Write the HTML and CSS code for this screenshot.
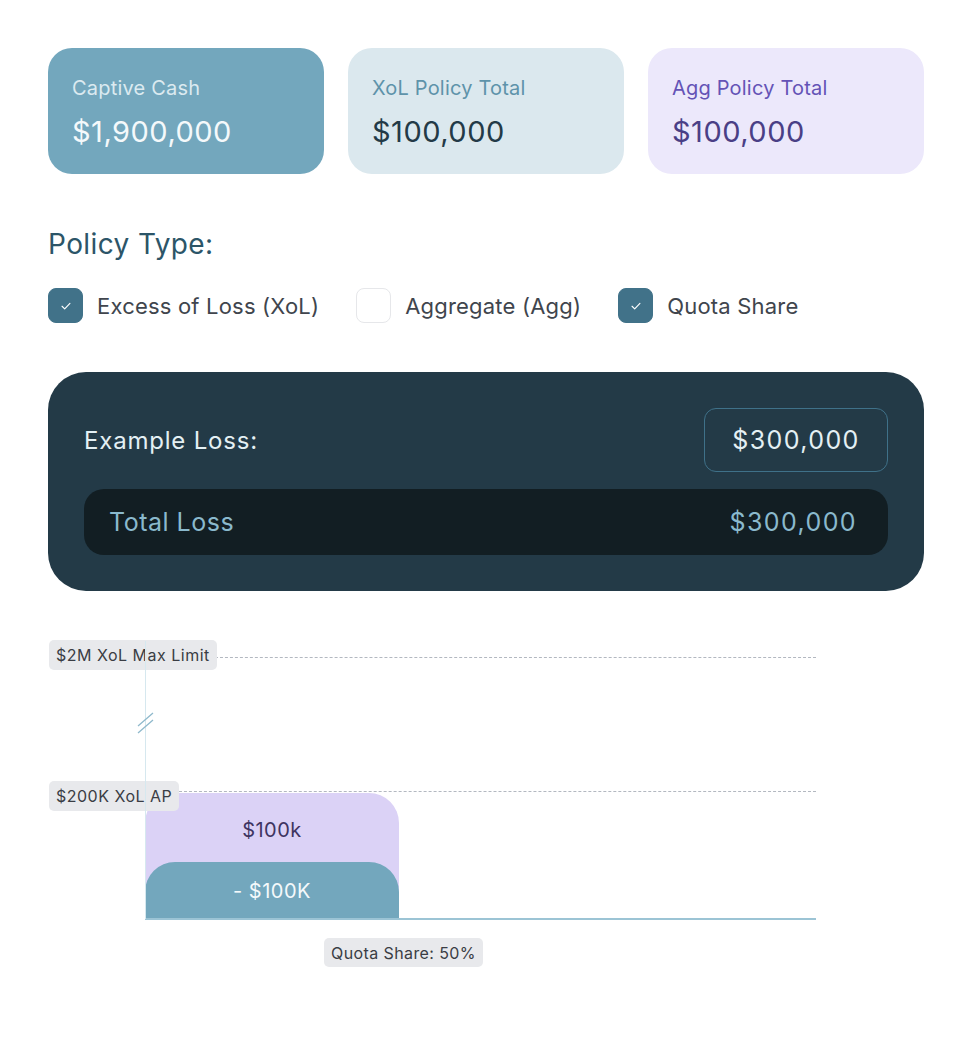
FILE: index.html
```html
<!DOCTYPE html>
<html>
<head>
<meta charset="utf-8">
<link rel="stylesheet" href="styles.css">
</head>
<body>
<main class="page">
  <section class="cards">
    <div class="card card-cash">
      <div class="card-label">Captive Cash</div>
      <div class="card-value">$1,900,000</div>
    </div>
    <div class="card card-xol">
      <div class="card-label">XoL Policy Total</div>
      <div class="card-value">$100,000</div>
    </div>
    <div class="card card-agg">
      <div class="card-label">Agg Policy Total</div>
      <div class="card-value">$100,000</div>
    </div>
  </section>

  <section class="policy">
    <h2 class="policy-title">Policy Type:</h2>
    <div class="options">
      <label class="option">
        <span class="box checked"><svg viewBox="0 0 16 16" width="14" height="14"><path d="M3.5 8.3l3 3 6-6.2" fill="none" stroke="#fff" stroke-width="1.3" stroke-linecap="round" stroke-linejoin="round"/></svg></span>
        <span class="option-text">Excess of Loss (XoL)</span>
      </label>
      <label class="option">
        <span class="box"></span>
        <span class="option-text">Aggregate (Agg)</span>
      </label>
      <label class="option">
        <span class="box checked"><svg viewBox="0 0 16 16" width="14" height="14"><path d="M3.5 8.3l3 3 6-6.2" fill="none" stroke="#fff" stroke-width="1.3" stroke-linecap="round" stroke-linejoin="round"/></svg></span>
        <span class="option-text">Quota Share</span>
      </label>
    </div>
  </section>

  <section class="loss-panel">
    <div class="loss-row">
      <span class="loss-label">Example Loss:</span>
      <div class="loss-input">$300,000</div>
    </div>
    <div class="total-row">
      <span class="total-label">Total Loss</span>
      <span class="total-value">$300,000</span>
    </div>
  </section>

  <section class="chart">
    <div class="pill pill-max">$2M XoL Max Limit</div>
    <div class="dash dash-max"></div>
    <div class="axis"></div>
    <svg class="break" width="20" height="28" viewBox="0 0 20 28"><path d="M2 18L17 5M2 25L17 12" stroke="#8fb9cc" stroke-width="1.3" fill="none"/></svg>
    <div class="dash dash-ap"></div>
    <div class="bar bar-agg"><span>$100k</span></div>
    <div class="bar bar-qs"><span>- $100K</span></div>
    <div class="pill pill-ap">$200K XoL AP</div>
    <div class="baseline"></div>
    <div class="pill pill-qs">Quota Share: 50%</div>
  </section>
</main>
</body>
</html>
```

FILE: styles.css
```css
* { box-sizing: border-box; }
body {
  margin: 0;
  background: #ffffff;
  font-family: Inter, "Noto Sans", "Liberation Sans", sans-serif;
}
.page {
  padding: 48px 48px 0 48px;
  width: 972px;
}
.cards {
  display: grid;
  grid-template-columns: repeat(3, 1fr);
  gap: 24px;
}
.card {
  height: 126px;
  border-radius: 24px;
  padding: 4px 24px 0 24px;
  display: flex;
  flex-direction: column;
  justify-content: center;
  gap: 12px;
}
.card-label {
  font-size: 20px;
  line-height: 26px;
  letter-spacing: 0.2px;
}
.card-value {
  font-size: 29px;
  line-height: 38px;
  letter-spacing: 0.5px;
}
.card-cash { background: #73a7bd; }
.card-cash .card-label { color: #dbeaf0; }
.card-cash .card-value { color: #f4f9fb; }
.card-xol { background: #dbe8ee; }
.card-xol .card-label { color: #5e93aa; }
.card-xol .card-value { color: #233a47; }
.card-agg { background: #ece8fb; }
.card-agg .card-label { color: #6453b6; }
.card-agg .card-value { color: #4a3f86; }

.policy { margin-top: 52px; }
.policy-title {
  margin: 0;
  font-weight: 400;
  font-size: 28px;
  line-height: 36px;
  color: #2c5568;
  letter-spacing: 0.4px;
}
.options {
  display: flex;
  gap: 37px;
  margin-top: 26px;
}
.option {
  display: flex;
  align-items: center;
  gap: 14px;
}
.box {
  width: 35px;
  height: 35px;
  border-radius: 8px;
  border: 1px solid #e6e7ea;
  background: #fff;
  display: flex;
  align-items: center;
  justify-content: center;
}
.box.checked {
  background: #417289;
  border-color: #417289;
}
.option-text {
  font-size: 22px;
  color: #40454d;
  letter-spacing: 0.2px;
}

.loss-panel {
  margin-top: 49px;
  background: #233a47;
  border-radius: 38px;
  padding: 36px;
  display: flex;
  flex-direction: column;
  gap: 17px;
}
.loss-row {
  display: flex;
  align-items: center;
  justify-content: space-between;
}
.loss-label {
  font-size: 24px;
  color: #e4f0f4;
  letter-spacing: 0.8px;
}
.loss-input {
  width: 184px;
  height: 64px;
  border: 1.5px solid #3f7189;
  border-radius: 12px;
  display: flex;
  align-items: center;
  justify-content: center;
  font-size: 25px;
  color: #e4f0f4;
  letter-spacing: 1.4px;
}
.total-row {
  height: 66px;
  background: #121e23;
  border-radius: 20px;
  padding: 0 31px 0 25px;
  display: flex;
  align-items: center;
  justify-content: space-between;
  color: #8ab9cd;
}
.total-label {
  font-size: 25px;
  letter-spacing: 0.5px;
}
.total-value {
  font-size: 25px;
  letter-spacing: 1.4px;
}

.chart {
  position: relative;
  margin-top: 40px;
  height: 345px;
  width: 768px;
}
.pill {
  position: absolute;
  height: 30px;
  padding: 0 7px;
  background: #e8e9ec;
  border-radius: 5px;
  font-size: 16px;
  color: #3a3d44;
  display: flex;
  align-items: center;
  white-space: nowrap;
  letter-spacing: 0.5px;
  z-index: 2;
}
.pill-max { left: 1px; top: 9px; }
.pill-ap { left: 1px; top: 150px; }
.pill-qs { left: 276px; top: 307px; height: 29px; letter-spacing: 0.4px; }
.dash {
  position: absolute;
  height: 0;
  border-top: 1.3px dashed #b3b8c0;
  right: 0;
}
.dash-max { left: 167px; top: 26px; }
.dash-ap { left: 131px; top: 160px; }
.axis {
  position: absolute;
  left: 97px;
  top: 10px;
  width: 1px;
  height: 278px;
  background: #d6e8ef;
  z-index: 3;
}
.break {
  position: absolute;
  left: 88px;
  top: 77px;
  z-index: 4;
}
.bar {
  position: absolute;
  left: 97px;
  width: 254px;
  border-radius: 30px 30px 0 0;
  display: flex;
  justify-content: center;
  font-size: 20px;
  letter-spacing: 0.5px;
}
.bar-agg {
  top: 162px;
  height: 126px;
  background: #dbd2f6;
  color: #3e3461;
  padding-top: 25px;
}
.bar-qs {
  top: 231px;
  height: 57px;
  background: #73a7bd;
  color: #f4f9fb;
  align-items: center;
}
.baseline {
  position: absolute;
  left: 97px;
  right: 0;
  top: 287px;
  height: 2px;
  background: #9cc4d5;
}
```
